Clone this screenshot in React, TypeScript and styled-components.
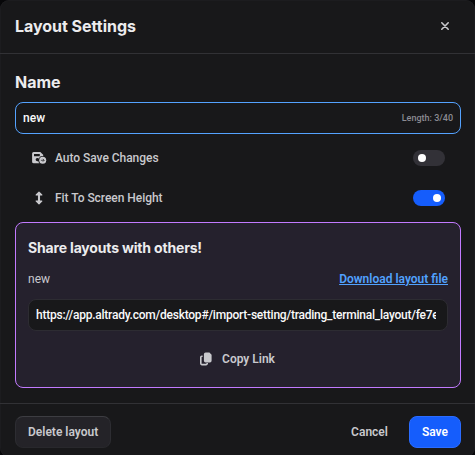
import React, { useState } from "react";
import styled, { createGlobalStyle, css } from "styled-components";

const GlobalStyle = createGlobalStyle`
  * { box-sizing: border-box; }
  html, body { margin: 0; height: 100%; background: #070709; overflow: hidden; }
  button, input { font: inherit; }
`;

const Dialog = styled.section`
  width: 475px;
  height: 457px;
  display: flex;
  flex-direction: column;
  background: #18181a;
  border-radius: 9px;
  box-shadow: inset 0 0 0 1px #1c1c1f;
  overflow: hidden;
  color: #c9c9cd;
  font: 400 12px/16px Roboto, sans-serif;
`;

const Header = styled.header`
  height: 54px;
  flex: none;
  display: flex;
  align-items: center;
  justify-content: space-between;
  padding: 0 24px 1px 15px;
  border-bottom: 1px solid #313135;
`;

const Title = styled.h1`
  margin: 0;
  color: #ececee;
  font: 650 16px/24px Inter, sans-serif;
  letter-spacing: -0.03px;
`;

const CloseButton = styled.button`
  display: flex;
  padding: 4px;
  margin: 0 -3px 0 0;
  border: 0;
  background: none;
  color: #c9c9cd;
`;

const Body = styled.main`
  height: 349px;
  flex: none;
  display: flex;
  flex-direction: column;
  padding: 16px 14px 0 15px;
`;

const FieldTitle = styled.h2`
  margin: 0 0 8px;
  color: #ececee;
  font: 650 16px/24px Inter, sans-serif;
`;

const Field = styled.label<{ $active?: boolean }>`
  height: 32px;
  flex: none;
  display: flex;
  align-items: center;
  padding: 0 ${(p) => (p.$active ? 7 : 11)}px 0 7px;
  border: 1px solid ${(p) => (p.$active ? "#54a2ff" : "#2d2c32")};
  border-radius: 8px;
  background: #18181a;
`;

const FieldInput = styled.input`
  min-width: 0;
  flex: 1;
  padding: 0;
  border: 0;
  outline: 0;
  background: transparent;
  color: #fafafa;
  font-weight: 500;
  letter-spacing: ${(p) => (p.readOnly ? "-0.23px" : "0.05px")};
`;

const Counter = styled.span`
  color: #8b8b92;
  font-size: 9px;
  font-weight: 500;
`;

const Options = styled.div`
  flex: none;
  padding: 4px 16px;
`;

const Option = styled.div`
  height: 40px;
  display: flex;
  align-items: center;
  gap: 8px;
`;

const OptionIcon = styled.span`
  width: 16px;
  display: flex;
  justify-content: center;
`;

const OptionLabel = styled.span`
  flex: 1;
  font-weight: 500;
  letter-spacing: -0.04px;
`;

const Switch = styled.button<{ $on: boolean }>`
  width: 32px;
  height: 16px;
  display: flex;
  align-items: center;
  justify-content: ${(p) => (p.$on ? "flex-end" : "flex-start")};
  padding: 0 ${(p) => (p.$on ? 4 : 5)}px;
  border: 0;
  border-radius: 8px;
  background: ${(p) => (p.$on ? "#155dfc" : "#323137")};
`;

const Thumb = styled.span`
  width: 8px;
  height: 8px;
  border-radius: 50%;
  background: #fff;
`;

const SharePanel = styled.section`
  height: 166px;
  flex: none;
  display: flex;
  flex-direction: column;
  padding: 13px 12px 0;
  border: 1px solid #c27aff;
  border-radius: 8px;
  background: #25212d;
`;

const ShareTitle = styled.h3`
  margin: 0;
  color: #ececee;
  font: 650 14px/24px Inter, sans-serif;
  letter-spacing: -0.17px;
`;

const ShareRow = styled.div`
  height: 39px;
  flex: none;
  display: flex;
  align-items: center;
  justify-content: space-between;
  padding-bottom: 2px;
`;

const DownloadLink = styled.a`
  color: #51a2ff;
  font-weight: 600;
  text-decoration: underline;
`;

const Footer = styled.footer`
  flex: 1;
  display: flex;
  align-items: flex-start;
  gap: 8px;
  padding: 12px 14px 0 15px;
  border-top: 1px solid #313135;
`;

const Button = styled.button<{ $kind?: "primary" | "secondary"; $end?: boolean }>`
  height: 32px;
  flex: none;
  display: flex;
  align-items: center;
  justify-content: center;
  gap: 9px;
  padding: 0 12px;
  border: 1px solid transparent;
  border-radius: 8px;
  background: transparent;
  color: #c9c9cd;
  font-weight: 600;
  ${(p) => p.$end && css`margin-left: auto;`}
  ${(p) => p.$kind === "primary" && css`
    background: #155dfc;
    border-color: #2b6cff;
    color: #fff;
  `}
  ${(p) => p.$kind === "secondary" && css`
    background: #242328;
    border-color: #3d3d42 #2d2d32 #28282c;
  `}
`;

const CopyRow = styled.div`
  display: flex;
  justify-content: center;
  padding: 12px 2px 0 0;
`;

const CloseIcon = () => (
  <svg width="10" height="10" viewBox="0 0 10 10" fill="none" stroke="currentColor" strokeWidth="1.6" strokeLinecap="round">
    <path d="M1.8 1.8l6.4 6.4M8.2 1.8L1.8 8.2" />
  </svg>
);

const SaveIcon = () => (
  <svg width="16" height="14" viewBox="0 0 16 14" fill="none">
    <path
      d="M2.6 1h6.7l2.9 2.7v1.5a4.2 4.2 0 0 0-3.7 7.1H2.6A1.5 1.5 0 0 1 1.1 10.8V2.5A1.5 1.5 0 0 1 2.6 1zM3 2.9v2.4h5.8V2.9zM6.4 7a1.6 1.6 0 1 0 .8 2.9c0-.9.2-1.7.6-2.3A1.6 1.6 0 0 0 6.4 7z"
      fill="currentColor"
      fillRule="evenodd"
    />
    <circle cx="11.7" cy="9.3" r="3.5" fill="currentColor" />
    <path d="M9.9 9.3h3.2M11.8 7.9l1.4 1.4-1.4 1.4" stroke="#18181a" strokeWidth="0.7" />
  </svg>
);

const HeightIcon = () => (
  <svg width="10" height="14" viewBox="0 0 10 14" fill="currentColor" stroke="currentColor" strokeLinejoin="round">
    <path d="M5 1.2L7.8 4H2.2zM5 12.8L2.2 10h5.6z" strokeWidth="1.2" />
    <path d="M5 3v8" strokeWidth="2.1" />
  </svg>
);

const CopyIcon = () => (
  <svg width="14" height="14" viewBox="0 0 14 14" fill="none">
    <path d="M6.6.6h3.8l2.2 2.2v5.9A1.7 1.7 0 0 1 10.9 10.4H6.6a1.7 1.7 0 0 1-1.7-1.7V2.3A1.7 1.7 0 0 1 6.6.6z" fill="currentColor" />
    <path d="M3.6 4.2h-.8a1 1 0 0 0-1 1v6.4a1 1 0 0 0 1 1h4.4a1 1 0 0 0 1-1v-.6" stroke="currentColor" strokeWidth="1.6" />
  </svg>
);

export default function App() {
  const [name, setName] = useState("new");
  const [autoSave, setAutoSave] = useState(false);
  const [fitHeight, setFitHeight] = useState(true);

  return (
    <>
      <GlobalStyle />
      <Dialog>
        <Header>
          <Title>Layout Settings</Title>
          <CloseButton aria-label="Close"><CloseIcon /></CloseButton>
        </Header>
        <Body>
          <FieldTitle>Name</FieldTitle>
          <Field $active>
            <FieldInput value={name} maxLength={40} onChange={(e) => setName(e.target.value)} />
            <Counter>Length: {name.length}/40</Counter>
          </Field>
          <Options>
            <Option>
              <OptionIcon><SaveIcon /></OptionIcon>
              <OptionLabel>Auto Save Changes</OptionLabel>
              <Switch role="switch" aria-checked={autoSave} $on={autoSave} onClick={() => setAutoSave(!autoSave)}><Thumb /></Switch>
            </Option>
            <Option>
              <OptionIcon><HeightIcon /></OptionIcon>
              <OptionLabel>Fit To Screen Height</OptionLabel>
              <Switch role="switch" aria-checked={fitHeight} $on={fitHeight} onClick={() => setFitHeight(!fitHeight)}><Thumb /></Switch>
            </Option>
          </Options>
          <SharePanel>
            <ShareTitle>Share layouts with others!</ShareTitle>
            <ShareRow>
              <span>{name}</span>
              <DownloadLink>Download layout file</DownloadLink>
            </ShareRow>
            <Field>
              <FieldInput readOnly value="https://app.altrady.com/desktop#/import-setting/trading_terminal_layout/fe7e" />
            </Field>
            <CopyRow>
              <Button><CopyIcon />Copy Link</Button>
            </CopyRow>
          </SharePanel>
        </Body>
        <Footer>
          <Button $kind="secondary">Delete layout</Button>
          <Button $end>Cancel</Button>
          <Button $kind="primary">Save</Button>
        </Footer>
      </Dialog>
    </>
  );
}
